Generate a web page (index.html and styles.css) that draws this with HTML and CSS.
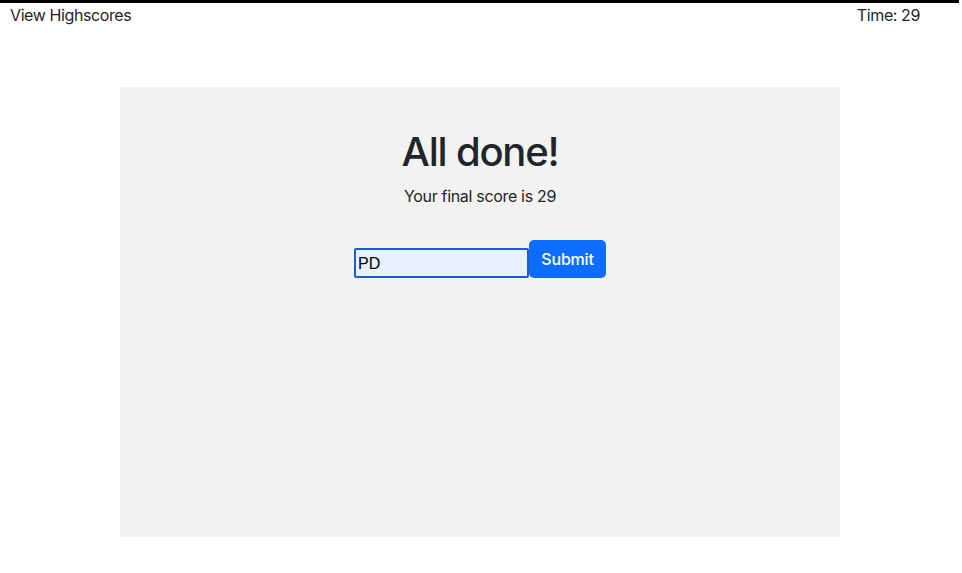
FILE: index.html
```html
<!DOCTYPE html>
<html>
<head>
<meta charset="utf-8">
<link rel="stylesheet" href="styles.css">
</head>
<body>
<header class="topbar">
  <a class="highscores">View Highscores</a>
  <span class="timer">Time: 29</span>
</header>
<main class="card">
  <h1 class="title">All done!</h1>
  <p class="score">Your final score is 29</p>
  <form class="entry">
    <input class="initials" type="text" value="PD">
    <button class="submit" type="button">Submit</button>
  </form>
</main>
</body>
</html>
```
FILE: styles.css
```css
html, body {
  margin: 0;
  padding: 0;
  background: #fff;
}
body {
  font-family: Inter, "Noto Sans", "Liberation Sans", sans-serif;
  color: #212529;
  font-size: 16px;
  line-height: 24px;
}
.topbar {
  width: 959px;
  border-top: 3px solid #000;
  display: flex;
  justify-content: space-between;
  padding: 0 39px 0 10px;
  box-sizing: border-box;
  height: 27px;
}
.highscores, .timer {
  color: #212529;
  line-height: 24px;
  letter-spacing: -0.4px;
}
.card {
  width: 720px;
  height: 450px;
  margin: 60px 0 0 120px;
  background: #f2f3f1;
  box-sizing: border-box;
  padding-top: 41px;
  display: flex;
  flex-direction: column;
  align-items: center;
}
.title {
  margin: 0 0 8px;
  font-size: 40px;
  line-height: 48px;
  font-weight: 500;
  letter-spacing: -1.2px;
}
.score {
  margin: 0;
  font-size: 16px;
  line-height: 24px;
  letter-spacing: -0.32px;
}
.entry {
  margin-top: 32px;
  display: flex;
  align-items: flex-end;
}
.initials {
  width: 175px;
  height: 30px;
  box-sizing: border-box;
  border: 2px solid #1d5fc6;
  border-radius: 2px;
  background: #e8f0fe;
  font-family: "Liberation Sans", Arial, sans-serif;
  font-size: 16px;
  color: #000;
  padding: 2px 2px 0;
  outline: none;
}
.submit {
  width: 77px;
  height: 38px;
  background: #0d6efd;
  color: #fff;
  border: none;
  border-radius: 5px;
  font-family: Inter, "Noto Sans", sans-serif;
  font-size: 16px;
  line-height: 24px;
  padding: 6px 12px;
  font-weight: 500;
  letter-spacing: -0.2px;
}
```
